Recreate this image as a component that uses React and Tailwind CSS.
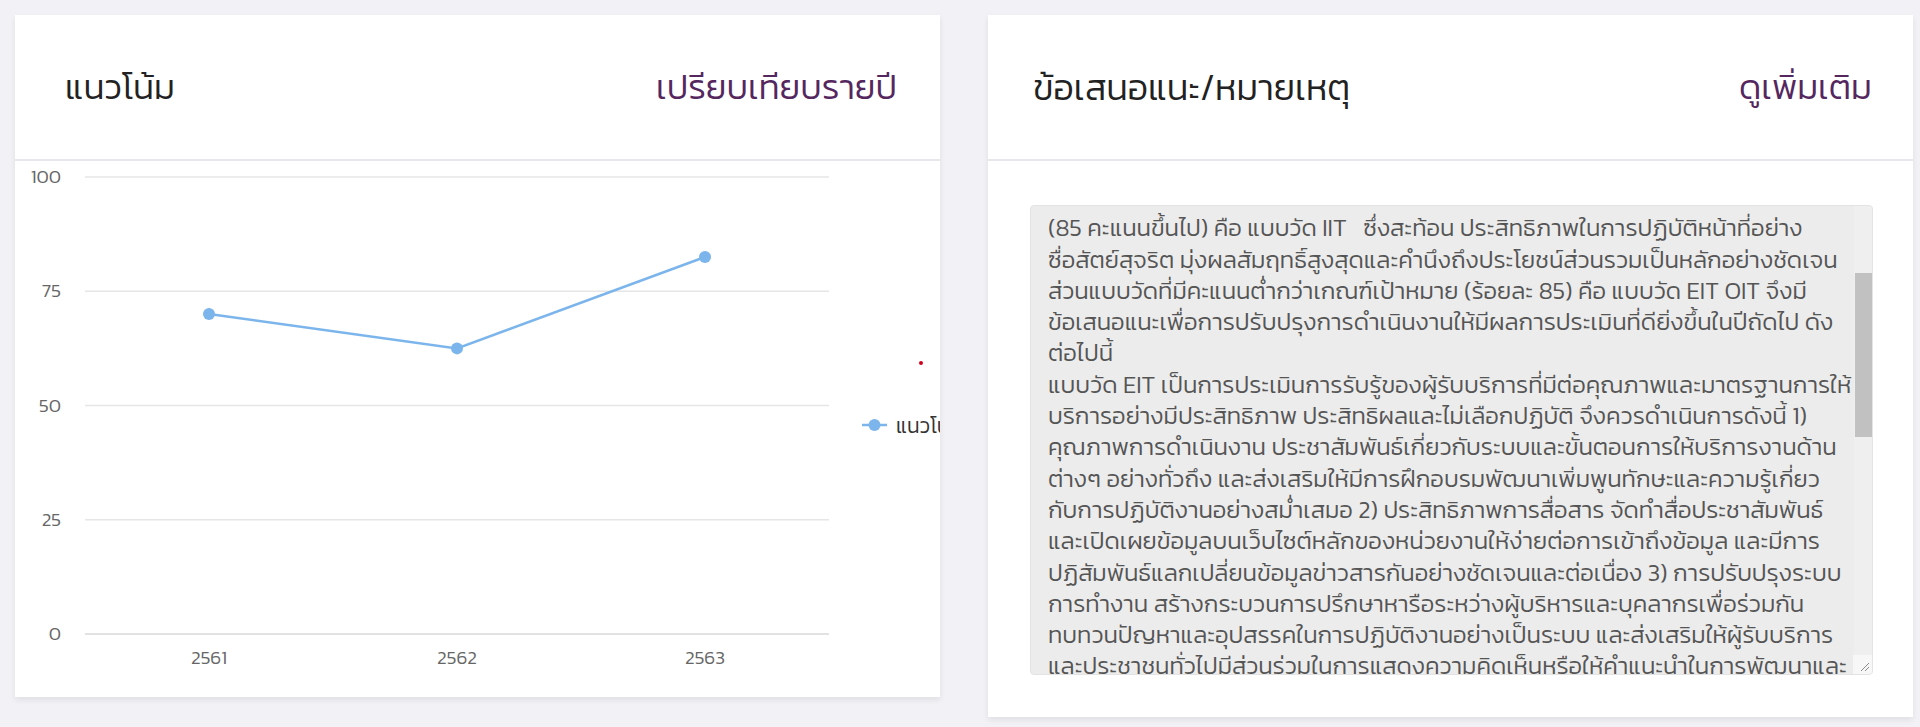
import React from "react";

const lines = [
  "ผลการประเมินพบว่า แบบวัดที่มีคะแนนผ่านเกณฑ์เป้าหมาย ร้อยละ 85 ขึ้นไป คือ แบบวัด",
  "(85 คะแนนขึ้นไป) คือ แบบวัด IIT   ซึ่งสะท้อน ประสิทธิภาพในการปฏิบัติหน้าที่อย่าง",
  "ซื่อสัตย์สุจริต มุ่งผลสัมฤทธิ์สูงสุดและคำนึงถึงประโยชน์ส่วนรวมเป็นหลักอย่างชัดเจน",
  "ส่วนแบบวัดที่มีคะแนนต่ำกว่าเกณฑ์เป้าหมาย (ร้อยละ 85) คือ แบบวัด EIT OIT จึงมี",
  "ข้อเสนอแนะเพื่อการปรับปรุงการดำเนินงานให้มีผลการประเมินที่ดียิ่งขึ้นในปีถัดไป ดัง",
  "ต่อไปนี้",
  "แบบวัด EIT เป็นการประเมินการรับรู้ของผู้รับบริการที่มีต่อคุณภาพและมาตรฐานการให้",
  "บริการอย่างมีประสิทธิภาพ ประสิทธิผลและไม่เลือกปฏิบัติ จึงควรดำเนินการดังนี้ 1)",
  "คุณภาพการดำเนินงาน ประชาสัมพันธ์เกี่ยวกับระบบและขั้นตอนการให้บริการงานด้าน",
  "ต่างๆ อย่างทั่วถึง และส่งเสริมให้มีการฝึกอบรมพัฒนาเพิ่มพูนทักษะและความรู้เกี่ยว",
  "กับการปฏิบัติงานอย่างสม่ำเสมอ 2) ประสิทธิภาพการสื่อสาร จัดทำสื่อประชาสัมพันธ์",
  "และเปิดเผยข้อมูลบนเว็บไซต์หลักของหน่วยงานให้ง่ายต่อการเข้าถึงข้อมูล และมีการ",
  "ปฏิสัมพันธ์แลกเปลี่ยนข้อมูลข่าวสารกันอย่างชัดเจนและต่อเนื่อง 3) การปรับปรุงระบบ",
  "การทำงาน สร้างกระบวนการปรึกษาหารือระหว่างผู้บริหารและบุคลากรเพื่อร่วมกัน",
  "ทบทวนปัญหาและอุปสรรคในการปฏิบัติงานอย่างเป็นระบบ และส่งเสริมให้ผู้รับบริการ",
  "และประชาชนทั่วไปมีส่วนร่วมในการแสดงความคิดเห็นหรือให้คำแนะนำในการพัฒนาและ",
  "ปรับปรุงการให้บริการของหน่วยงาน",
];

function TrendChart() {
  const base = 473;
  const h = 457;
  const pts = [
    { x: 194, v: 70, label: "2561" },
    { x: 442, v: 62.5, label: "2562" },
    { x: 690, v: 82.5, label: "2563" },
  ].map((p) => ({ ...p, y: base - (p.v / 100) * h }));
  const ticks = [100, 75, 50, 25, 0];
  return (
    <svg width="925" height="536" className="block" fontWeight="300">
      {ticks.map((t) => {
        const y = base - (t / 100) * h;
        return (
          <g key={t}>
            <line x1="70" x2="814" y1={y} y2={y} stroke={t === 0 ? "#d9d9d9" : "#e6e6e6"} strokeWidth="1.5" />
            <text x="46" y={y + 6} textAnchor="end" fontSize="19" fill="#666">
              {t}
            </text>
          </g>
        );
      })}
      {pts.map((p) => (
        <text key={p.label} x={p.x} y="503" textAnchor="middle" fontSize="19" fill="#666">
          {p.label}
        </text>
      ))}
      <polyline
        points={pts.map((p) => `${p.x},${p.y}`).join(" ")}
        fill="none"
        stroke="#7cb5ec"
        strokeWidth="2.5"
      />
      {pts.map((p) => (
        <circle key={p.label + "c"} cx={p.x} cy={p.y} r="6" fill="#7cb5ec" />
      ))}
      <circle cx="906" cy="202" r="2" fill="#d0021b" />
      <line x1="847" x2="872" y1="264" y2="264" stroke="#7cb5ec" strokeWidth="2.5" />
      <circle cx="859.5" cy="264" r="6" fill="#7cb5ec" />
      <text x="881" y="272" fontSize="21" fill="#333">
        แนวโน้ม
      </text>
    </svg>
  );
}

export default function App() {
  return (
    <div className="min-h-[727px] w-[1920px] bg-[#f1f1f6] pt-[15px] pl-[15px] font-['Kanit','Prompt','Noto_Sans_Thai','Noto_Sans',sans-serif]">
      <div className="flex items-start gap-[48px]">
        {/* Left card */}
        <div className="w-[925px] h-[682px] overflow-hidden bg-white shadow-[0_3px_6px_rgba(0,0,0,0.08)]">
          <div className="flex h-[146px] items-center justify-between border-b-2 border-[#e7e7ec] pl-[50px] pr-[43px]">
            <div className="text-[35px] font-light text-[#222]">แนวโน้ม</div>
            <div className="text-[35px] font-light text-[#55275f]">เปรียบเทียบรายปี</div>
          </div>
          <TrendChart />
        </div>

        {/* Right card */}
        <div className="w-[925px] h-[702px] bg-white shadow-[0_3px_6px_rgba(0,0,0,0.08)]">
          <div className="flex h-[146px] items-center justify-between border-b-2 border-[#e7e7ec] pl-[45px] pr-[41px]">
            <div className="text-[36px] font-light text-[#222]">ข้อเสนอแนะ/หมายเหตุ</div>
            <div className="text-[35px] font-light text-[#55275f]">ดูเพิ่มเติม</div>
          </div>
          <div className="px-[42px] pt-[44px]">
            <div className="relative flex h-[470px] w-[843px] overflow-hidden rounded-[4px] border border-[#e3e3e3] bg-[#ececec]">
              <div className="flex-1 overflow-hidden pl-[17px]">
                <div className="-mt-[25px] text-[24px] font-light leading-[31.3px] text-[#555] whitespace-pre">
                  {lines.map((l, i) => (
                    <div key={i}>{l}</div>
                  ))}
                </div>
              </div>
              <div className="relative w-[18px] bg-[#efefef]">
                <div className="absolute left-[1px] right-0 top-[67px] h-[164px] bg-[#c1c1c1]" />
              </div>
              <div className="absolute bottom-0 right-0 flex h-[19px] w-[19px] items-end justify-end bg-[#f7f7f7]">
                <svg width="19" height="19" viewBox="0 0 19 19">
                  <line x1="16" y1="8" x2="8" y2="16" stroke="#8a8a8a" strokeWidth="1" />
                  <line x1="16" y1="12" x2="12" y2="16" stroke="#8a8a8a" strokeWidth="1" />
                </svg>
              </div>
            </div>
          </div>
        </div>
      </div>
    </div>
  );
}
